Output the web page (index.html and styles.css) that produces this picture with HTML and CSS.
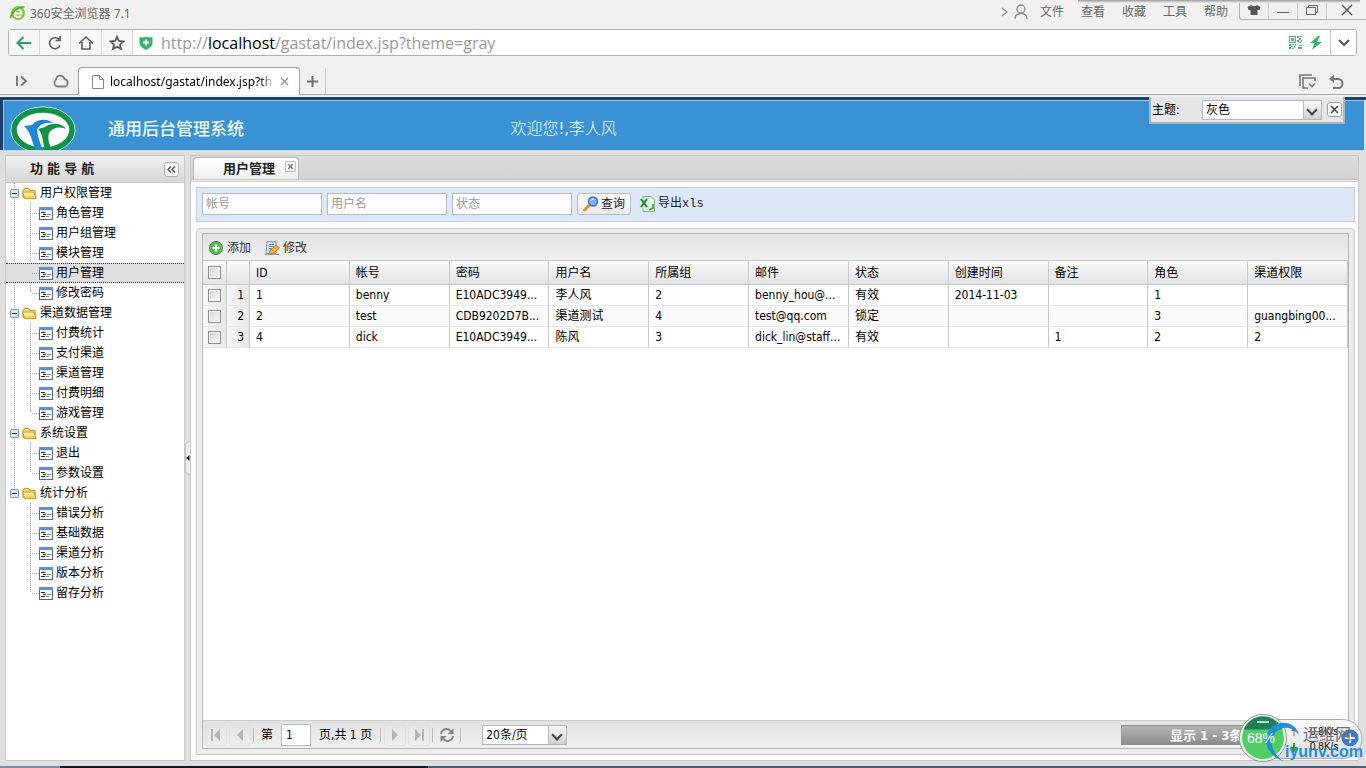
FILE: index.html
```html
<!DOCTYPE html>
<html lang="zh-CN">
<head>
	<meta charset="utf-8">
	<title>通用后台管理系统</title>
	<link rel="stylesheet" href="styles.css">
</head>
<body>
	<svg class="sprite">
		<linearGradient id="fold" x1="0" y1="0" x2="0" y2="1"><stop offset="0" stop-color="#fff8c0"/><stop offset="1" stop-color="#f0c838"/></linearGradient>
		<symbol id="i-folder" viewBox="0 0 16 16">
			<path d="M1 12V4L2.500 2.500H7L8.500 4.500H14V12.500Z" fill="#f6dc70" stroke="#b58a1c"/>
			<path d="M2.500 13.500L.8 6.500H12.500L15.200 13.500Z" fill="url(#fold)" stroke="#c09a30"/>
		</symbol>
		<symbol id="i-leaf" viewBox="0 0 14 13">
			<rect x=".5" y=".5" width="13" height="12" fill="#fff" stroke="#4a6894"/>
			<rect x="0" y="0" width="14" height="3" fill="#5f8ede"/>
			<path d="M2 5.500H6M4 7.500H7M2 9.500H6" stroke="#222"/>
			<path d="M8 7.500H12M7 9.500H10" stroke="#7c8894"/>
		</symbol>
		<symbol id="i-minus" viewBox="0 0 9 9">
			<rect x=".5" y=".5" width="8" height="8" rx="1" fill="#dbe7f6" stroke="#7590b4"/>
			<path d="M2 4.500H7" stroke="#1c3050"/>
		</symbol>
	</svg>

	<div class="titlebar">
		<svg width="16" height="16" viewBox="0 0 16 16"><circle cx="8" cy="8" r="7" fill="#7cc93a"/><path d="M4.500 8.500H11.500C11.500 3.500 4.500 3.500 4.500 8.500C4.500 12.500 9.500 13 11.300 10.500" fill="none" stroke="#fff" stroke-width="2"/><path d="M1 13C0 9 8 1 14.500 2" fill="none" stroke="#4ba51c" stroke-width="1.500"/></svg>
		<span class="app-name">360安全浏览器 7.1</span>
		<svg class="user" width="28" height="16" viewBox="0 0 28 16" fill="none" stroke="#8a8a8a" stroke-width="1.300"><path d="M1 4L6 8L1 12"/><circle cx="20" cy="5" r="4"/><path d="M14 15C14 11 17 9.500 20 9.500S26 11 26 15"/></svg>
		<a href="#">文件</a>
		<a href="#">查看</a>
		<a href="#">收藏</a>
		<a href="#">工具</a>
		<a href="#">帮助</a>
		<div class="winbtns">
			<button aria-label="皮肤"><svg width="14" height="12" viewBox="0 0 14 12"><path d="M4 1Q7 3.500 10 1L13.500 3L12.500 6H10.500V11H3.500V6H1.500L.5 3Z" fill="#555"/></svg></button>
			<button aria-label="最小化"><svg width="12" height="12" viewBox="0 0 12 12"><path d="M0 8.500H12" stroke="#666"/></svg></button>
			<button aria-label="还原"><svg width="12" height="12" viewBox="0 0 12 12" fill="none" stroke="#666"><path d="M2.500 3V1.500H11.500V8.500H10"/><path d="M.5 3.500H9.500V10.500H.5Z"/></svg></button>
			<button aria-label="关闭"><svg width="12" height="12" viewBox="0 0 12 12"><path d="M1 1L11 11M11 1L1 11" stroke="#555" stroke-width="1.400"/></svg></button>
		</div>
		<div class="shade"></div>
	</div>

	<div class="addressbar">
		<button aria-label="后退"><svg width="18" height="16" viewBox="0 0 18 16" fill="none" stroke="#27a35f" stroke-width="2"><path d="M8.500 2L2.500 8L8.500 14M2.500 8H16"/></svg></button>
		<button aria-label="刷新"><svg width="16" height="16" viewBox="0 0 16 16" fill="none" stroke="#5a5a5a" stroke-width="1.600"><path d="M12.500 5A5.500 5.500 0 1 0 13 10.500"/><path d="M13 1V5.500H8.500"/></svg></button>
		<button aria-label="主页"><svg width="16" height="16" viewBox="0 0 16 16" fill="none" stroke="#5a5a5a" stroke-width="1.600"><path d="M1 8.500L8 2L15 8.500M4 7V14H12V7"/></svg></button>
		<button aria-label="收藏"><svg width="16" height="16" viewBox="0 0 16 16" fill="none" stroke="#5a5a5a" stroke-width="1.800"><path d="M8 1.800L9.900 6L14.400 6.500L11 9.600L12 14L8 11.700L4 14L5 9.600L1.600 6.500L6.100 6Z"/></svg></button>
		<div class="url">
			<svg width="14" height="14" viewBox="0 0 14 14"><path d="M.5 1Q4 2 7 .5Q10 2 13.500 1V8Q13 11 7 14Q1 11 .5 8Z" fill="#35b56c"/><path d="M7 3.500V9.500M4 6.500H10" stroke="#fff" stroke-width="2"/></svg>
			<span class="addr">http://<b>localhost</b>/gastat/index.jsp?theme=gray</span>
			<svg width="13" height="13" viewBox="0 0 13 13" fill="#45b878"><path d="M0 0H7V7H0ZM1 1V6H6V1Z" fill-rule="evenodd"/><path d="M2 2H5V5H2ZM8 0H10V2H8ZM11 0H13V1H11ZM10 2H12V4H10ZM8 4H10V6H8ZM12 4H13V6H12ZM10 6H12V7H10ZM0 8H2V10H0ZM3 8H5V9H3ZM6 8H7V10H6ZM2 10H4V11H2ZM5 10H6V12H5ZM0 11H2V13H0ZM3 12H5V13H3ZM10 9H13V10H10ZM9 11H13V13H9Z"/></svg>
			<svg class="bolt" width="12" height="14" viewBox="0 0 12 14"><path d="M8 0L0 7H4.500L2 14L12 6H7L10 0Z" fill="#35b56c"/></svg>
		</div>
		<button class="drop" aria-label="历史"><svg width="14" height="12" viewBox="0 0 14 12"><path d="M2 3L7 8L12 3" fill="none" stroke="#555" stroke-width="2"/></svg></button>
	</div>

	<div class="tabstrip">
		<svg class="side" width="12" height="12" viewBox="0 0 12 12" fill="none" stroke="#707070" stroke-width="1.800"><path d="M1 1V11M5 1.500L10 6L5 10.500"/></svg>
		<svg class="cloud" width="18" height="14" viewBox="0 0 18 14"><path d="M5 12.500A4 4 0 0 1 4 5.500C5 .5 11 .5 12.500 5A4 4 0 0 1 13.500 12.500Z" fill="none" stroke="#808080" stroke-width="1.800"/></svg>
		<div class="browser-tab">
			<svg width="12" height="14" viewBox="0 0 12 14" fill="none" stroke="#888"><path d="M.5 .5H7.500L11.500 4.500V13.500H.5ZM7.500 .5V4.500H11.500"/></svg>
			<span>localhost/gastat/index.jsp?th</span>
			<svg width="9" height="9" viewBox="0 0 9 9"><path d="M1 1L8 8M8 1L1 8" stroke="#909090" stroke-width="1.300"/></svg>
		</div>
		<button class="newtab" aria-label="新标签"><svg width="11" height="11" viewBox="0 0 11 11"><path d="M5.500 0V11M0 5.500H11" stroke="#707070" stroke-width="2"/></svg></button>
		<svg class="restore" width="48" height="18" viewBox="0 0 48 18" fill="none" stroke="#777" stroke-width="1.600"><path d="M2 13V2H14"/><path d="M10 15H5V5H17V8"/><path d="M11 10.500L14 13.500L17 10.500"/><path d="M34 6H40A4.500 4.500 0 0 1 40 15H35" stroke-width="2"/><path d="M36 1.500L31 6L36 10Z" fill="#777" stroke="none"/></svg>
	</div>

	<div class="banner">
		<div class="brand">
			<svg class="logo" width="66" height="44" viewBox="0 0 66 44">
				<ellipse cx="33" cy="24" rx="32.500" ry="23.500" fill="#fff"/>
				<ellipse cx="33" cy="24" rx="29" ry="20" fill="#fff" stroke="#0f9244" stroke-width="5.500"/>
				<path d="M14 20L22 19C28 12 38 13 43 17C34 16 29 19 27 24C28 32 31 39 33 45H27C21 38 23 28 14 20Z" fill="#1d87d8"/>
				<path d="M28 23L35 21C42 16 52 17 56 23C49 20 42 22 39 27C37 34 40 41 43 45H36C32 38 34 29 28 23Z" fill="#0f9244"/>
			</svg>
			<h1>通用后台管理系统</h1>
		</div>
		<div class="welcome">欢迎您<b>!,</b>李人风</div>
		<div class="theme">
			<label for="theme">主题:</label>
			<span class="combo"><select id="theme"><option>灰色</option></select></span>
			<button aria-label="关闭"><svg width="9" height="9" viewBox="0 0 9 9"><path d="M1 1L8 8M8 1L1 8" stroke="#444" stroke-width="1.500"/></svg></button>
		</div>
	</div>

	<div class="workspace">
		<div class="sidebar">
			<div class="panel-head">
				<h2>功 能 导 航</h2>
				<button aria-label="收起"><svg width="9" height="7" viewBox="0 0 9 7" fill="none" stroke="#444" stroke-width="1.300"><path d="M4 .5L1 3.500L4 6.500M8 .5L5 3.500L8 6.500"/></svg></button>
			</div>
			<ul class="tree">
				<li><a class="node" href="#"><svg class="exp"><use href="#i-minus"/></svg><svg class="fold"><use href="#i-folder"/></svg>用户权限管理</a>
					<ul>
						<li><a href="#"><svg><use href="#i-leaf"/></svg>角色管理</a></li>
						<li><a href="#"><svg><use href="#i-leaf"/></svg>用户组管理</a></li>
						<li><a href="#"><svg><use href="#i-leaf"/></svg>模块管理</a></li>
						<li><a href="#" class="selected"><svg><use href="#i-leaf"/></svg>用户管理</a></li>
						<li><a href="#"><svg><use href="#i-leaf"/></svg>修改密码</a></li>
					</ul>
				</li>
				<li><a class="node" href="#"><svg class="exp"><use href="#i-minus"/></svg><svg class="fold"><use href="#i-folder"/></svg>渠道数据管理</a>
					<ul>
						<li><a href="#"><svg><use href="#i-leaf"/></svg>付费统计</a></li>
						<li><a href="#"><svg><use href="#i-leaf"/></svg>支付渠道</a></li>
						<li><a href="#"><svg><use href="#i-leaf"/></svg>渠道管理</a></li>
						<li><a href="#"><svg><use href="#i-leaf"/></svg>付费明细</a></li>
						<li><a href="#"><svg><use href="#i-leaf"/></svg>游戏管理</a></li>
					</ul>
				</li>
				<li><a class="node" href="#"><svg class="exp"><use href="#i-minus"/></svg><svg class="fold"><use href="#i-folder"/></svg>系统设置</a>
					<ul>
						<li><a href="#"><svg><use href="#i-leaf"/></svg>退出</a></li>
						<li><a href="#"><svg><use href="#i-leaf"/></svg>参数设置</a></li>
					</ul>
				</li>
				<li><a class="node" href="#"><svg class="exp"><use href="#i-minus"/></svg><svg class="fold"><use href="#i-folder"/></svg>统计分析</a>
					<ul>
						<li><a href="#"><svg><use href="#i-leaf"/></svg>错误分析</a></li>
						<li><a href="#"><svg><use href="#i-leaf"/></svg>基础数据</a></li>
						<li><a href="#"><svg><use href="#i-leaf"/></svg>渠道分析</a></li>
						<li><a href="#"><svg><use href="#i-leaf"/></svg>版本分析</a></li>
						<li><a href="#"><svg><use href="#i-leaf"/></svg>留存分析</a></li>
					</ul>
				</li>
			</ul>
		</div>
		<div class="splitter"><svg width="5" height="34" viewBox="0 0 5 34"><path d="M5 0L.5 3V31L5 34" fill="#eee" stroke="#c4c4c4"/><path d="M4.500 14V20L1 17Z" fill="#222"/></svg></div>
		<div class="main">
			<div class="tabs">
				<div class="tab">用户管理<button aria-label="关闭标签"><svg width="5" height="5" viewBox="0 0 5 5"><path d="M0 0L5 5M5 0L0 5" stroke="#777" stroke-width="1.500"/></svg></button></div>
			</div>
			<div class="content">
				<form class="search">
					<input type="text" placeholder="帐号" aria-label="帐号">
					<input type="text" placeholder="用户名" aria-label="用户名">
					<input type="text" placeholder="状态" aria-label="状态">
					<button type="button" class="query"><svg width="16" height="16" viewBox="0 0 16 16"><path d="M1.500 14L6 9.500" stroke="#d8912a" stroke-width="3" stroke-linecap="round"/><circle cx="10" cy="5.500" r="4.500" fill="#7fb0ee" stroke="#3c6cb8" stroke-width="1.400"/><path d="M7.500 5Q8.500 2.800 11 3" fill="none" stroke="#fff"/></svg>查询</button>
					<button type="button" class="export"><svg width="16" height="16" viewBox="0 0 16 16"><path d="M4 .5H12L15.500 4V15.500H4Z" fill="#e6f4e4" stroke="#7eb37e"/><rect x="0" y="2" width="10" height="10" fill="#d6ebd4"/><path d="M2 3L8 11M8 3L2 11" stroke="#237a34" stroke-width="2"/><path d="M10 14L14 12V8" fill="none" stroke="#3a9a4a" stroke-width="1.500"/></svg>导出xls</button>
				</form>
				<div class="gridframe">
					<div class="grid">
						<div class="toolbar">
							<button><svg width="16" height="16" viewBox="0 0 16 16"><circle cx="8" cy="8" r="6.500" fill="#5fb85a" stroke="#3a8f3c"/><path d="M8 4.500V11.500M4.500 8H11.500" stroke="#fff" stroke-width="2"/></svg>添加</button>
							<button><svg width="16" height="16" viewBox="0 0 16 16"><path d="M3 1.500H12V13.500H2Z" fill="#cfe2f6" stroke="#7a9cc4"/><path d="M5 4.500H10M5 6.500H10M5 8.500H8" stroke="#6a8cb8"/><path d="M.5 14.500H15" stroke="#a99"/><path d="M5 14L6 10.500L12.500 5L15.500 8L9 13.500Z" fill="#f6b33c" stroke="#c47a1a"/></svg>修改</button>
						</div>
						<div class="gridbody">
							<table>
								<colgroup><col class="c-check"><col class="c-num"><col span="11"></colgroup>
								<thead>
									<tr><th><input type="checkbox" aria-label="全选"></th><th></th><th>ID</th><th>帐号</th><th>密码</th><th>用户名</th><th>所属组</th><th>邮件</th><th>状态</th><th>创建时间</th><th>备注</th><th>角色</th><th>渠道权限</th></tr>
								</thead>
								<tbody>
									<tr><td class="gut"><input type="checkbox" aria-label="选择 1"></td><td class="gut num">1</td><td>1</td><td>benny</td><td>E10ADC3949...</td><td>李人风</td><td>2</td><td>benny_hou@...</td><td>有效</td><td>2014-11-03</td><td></td><td>1</td><td></td></tr>
									<tr><td class="gut"><input type="checkbox" aria-label="选择 2"></td><td class="gut num">2</td><td>2</td><td>test</td><td>CDB9202D7B...</td><td>渠道测试</td><td>4</td><td>test@qq.com</td><td>锁定</td><td></td><td></td><td>3</td><td>guangbing00...</td></tr>
									<tr><td class="gut"><input type="checkbox" aria-label="选择 3"></td><td class="gut num">3</td><td>4</td><td>dick</td><td>E10ADC3949...</td><td>陈风</td><td>3</td><td>dick_lin@staff...</td><td>有效</td><td></td><td>1</td><td>2</td><td>2</td></tr>
								</tbody>
							</table>
						</div>
						<div class="pager">
							<button aria-label="首页"><svg width="12" height="12" viewBox="0 0 12 12" fill="#b4b4b4"><path d="M1 0H3V12H1ZM10 0V12L4 6Z"/></svg></button>
							<button aria-label="上一页"><svg width="12" height="12" viewBox="0 0 12 12" fill="#b4b4b4"><path d="M9 0V12L3 6Z"/></svg></button>
							<i></i>
							<label for="page">第</label>
							<input id="page" type="text" value="1">
							<span class="total">页,共 1 页</span>
							<i></i>
							<button aria-label="下一页"><svg width="12" height="12" viewBox="0 0 12 12" fill="#b4b4b4"><path d="M3 0V12L9 6Z"/></svg></button>
							<button aria-label="末页"><svg width="12" height="12" viewBox="0 0 12 12" fill="#b4b4b4"><path d="M2 0V12L8 6ZM9 0H11V12H9Z"/></svg></button>
							<i></i>
							<button class="live" aria-label="刷新"><svg width="16" height="16" viewBox="0 0 16 16" fill="none" stroke="#858585" stroke-width="2"><path d="M2 7A5.500 5.500 0 0 1 12 4.500"/><path d="M14 9A5.500 5.500 0 0 1 4 11.500"/><path d="M14.500 1V7H8.500ZM1.500 15V9H7.500Z" fill="#858585" stroke="none"/></svg></button>
							<i></i>
							<span class="combo size"><select aria-label="每页条数"><option>20条/页</option></select></span>
							<div class="progress">显示 1 - 3条</div>
						</div>
					</div>
				</div>
			</div>
		</div>
	</div>
	<div class="taskbar"></div>

	<div class="meter">
		<svg width="128" height="56" viewBox="0 0 128 56">
			<defs><linearGradient id="pill" x1="0" y1="0" x2="0" y2="1"><stop offset="0" stop-color="#fbfbfb"/><stop offset="1" stop-color="#dcdcdc"/></linearGradient></defs>
			<rect x="20" y="9.500" width="104" height="39" rx="19.500" fill="url(#pill)" stroke="#aaa"/>
			<circle cx="25" cy="28" r="23.500" fill="#f2f8f2" stroke="#8a9a8a"/>
			<circle cx="25" cy="28" r="21" fill="#4fce66"/>
			<path d="M5.500 19.500A21 21 0 0 1 44.500 19.500Z" fill="#1f8058"/>
			<path d="M19 12H31" stroke="#b8e8c8" stroke-width="2"/>
			<path d="M56 26V20M53.500 21L56 17L58.500 21" stroke="#d24a4a" fill="#d24a4a"/>
			<path d="M56 33V38M53 37L56 41L59 37" stroke="#2f9a3f" stroke-width="2" fill="#2f9a3f"/>
			<circle cx="112" cy="28" r="8.500" fill="#3478d8"/>
			<path d="M112 23V33M107 28H117" stroke="#fff" stroke-width="2"/>
			<path d="M61 25C58 13 44 9 34 17C23 27 27 44 45 51C33 42 30 30 38 22C45 15 55 17 61 25Z" fill="#1b8fdc"/>
		</svg>
		<span class="pct">68%</span>
		<span class="up">0.8K/s</span>
		<span class="down">0.8K/s</span>
		<span class="mark-cn">运维网</span>
		<span class="mark-en">iyunv.com</span>
	</div>
</body>
</html>
```
FILE: styles.css
```css
* {
	box-sizing: border-box;
}
html, body {
	height: 100%;
}
body {
	margin: 0;
	display: flex;
	flex-direction: column;
	overflow: hidden;
	position: relative;
	background: #f0f0f0;
	color: #000;
	font: 12px/20px "DejaVu Sans Condensed", "Noto Sans", "Noto Sans CJK SC", sans-serif;
}
a {
	color: inherit;
	text-decoration: none;
}
button, input, select {
	font: inherit;
	color: inherit;
	margin: 0;
	padding: 0;
	border: 0;
	background: none;
}
button {
	display: flex;
	align-items: center;
	justify-content: center;
}
svg {
	flex: none;
}
.sprite {
	position: absolute;
	width: 0;
	height: 0;
}

/* browser window */
.titlebar {
	flex: none;
	height: 29px;
	display: flex;
	align-items: flex-start;
	padding-left: 10px;
	color: #666;
	font-family: "Noto Sans", "Noto Sans CJK SC", sans-serif;
	position: relative;
}
.titlebar > svg {
	margin-top: 5px;
}
.titlebar .user {
	margin-top: 4px;
}
.titlebar a {
	margin: 2px 0 0 17px;
}
.titlebar svg + a {
	margin-left: 11px;
}
.app-name {
	margin: 4px auto 0 4px;
}
.winbtns {
	display: flex;
	margin-left: 11px;
	border: solid #b5b5b5;
	border-width: 0 0 1px 1px;
	border-radius: 0 0 0 3px;
}
.winbtns button {
	width: 29px;
	height: 19px;
	border-right: 1px solid #d0d0d0;
}
.winbtns button:last-child {
	width: 39px;
	border: 0;
}
.shade {
	position: absolute;
	top: 0;
	right: 6px;
	width: 282px;
	height: 3px;
	background: linear-gradient(#999, #f0f0f0);
}
.addressbar {
	flex: none;
	height: 27px;
	margin: 0 9px 0 8px;
	display: flex;
	border: 1px solid #b0b0b0;
	border-radius: 3px;
	background: #fff;
}
.addressbar button {
	width: 31px;
	background: #f7f7f7;
	border-right: 1px solid #d8d8d8;
}
.addressbar .drop {
	width: 26px;
	background: #fff;
	border: 0;
	border-left: 1px solid #c0c0c0;
}
.url {
	flex: 1;
	display: flex;
	align-items: center;
	padding: 0 8px 0 6px;
	font: 16px/24px "Open Sans", sans-serif;
	color: #999;
}
.url b {
	font-weight: normal;
	color: #000;
}
.addr {
	flex: 1;
	margin-left: 8px;
}
.bolt {
	margin-left: 8px;
}
.tabstrip {
	flex: none;
	height: 39px;
	display: flex;
	align-items: flex-end;
	border-bottom: 1px solid #a8a8a8;
	font-family: "Noto Sans", sans-serif;
}
.side {
	margin: 0 0 7px 16px;
}
.cloud {
	margin: 0 8px 6px 24px;
}
.browser-tab {
	width: 222px;
	height: 28px;
	margin-bottom: -1px;
	display: flex;
	align-items: center;
	padding: 0 10px 0 13px;
	background: #fff;
	border: 1px solid #a0a0a0;
	border-bottom: 0;
	border-radius: 4px 4px 0 0;
}
.browser-tab span {
	flex: 1;
	margin: 0 4px 0 6px;
	white-space: nowrap;
	font-size: 12px;
	-webkit-mask-image: linear-gradient(to right, #000 90%, transparent);
}
.newtab {
	width: 26px;
	height: 26px;
	border-right: 1px solid #c8c8c8;
}
.restore {
	margin: 0 20px 3px auto;
}

/* page banner */
.banner {
	flex: none;
	height: 53px;
	display: flex;
	align-items: flex-start;
	padding: 3px 0 0;
	border: solid #1f3f6e;
	border-width: 2px 0 0;
	box-shadow: inset 0 1px #1f3f6e, inset 3px 0 #1f3f6e, inset -2px 0 #cfe4f6, inset 4px 2px #9fc8ea;
	background: #3a91d4;
	color: #ecffff;
	margin-top: 2px;
	position: relative;
}
.brand {
	flex: 0 0 37%;
	display: flex;
	padding-left: 10px;
}
.logo {
	margin-top: 4px;
}
h1 {
	margin: 17px 0 0 32px;
	font-size: 17px;
	line-height: 20px;
	font-weight: 500;
}
.welcome {
	margin: 17px 0 0 5px;
	font-size: 16px;
	font-weight: 300;
}
.theme {
	position: absolute;
	top: -2px;
	right: 21px;
	width: 196px;
	height: 27px;
	display: flex;
	align-items: center;
	padding: 0 1px;
	background: #e6e6e8;
	border: solid #a8b4c0;
	border-width: 0 2px 2px;
	color: #000;
}
.theme .combo {
	width: 120px;
	margin: 0 5px 0 auto;
}
.theme button {
	width: 15px;
	height: 15px;
	background: #fafafa;
	border: 1px solid #a0a0a0;
	border-radius: 3px;
}
.combo {
	display: inline-flex;
	position: relative;
	height: 20px;
	background: #fff;
	border: 1px solid #b0b8c4;
}
.combo select {
	appearance: none;
	width: 100%;
	padding-left: 3px;
	line-height: 18px;
}
.combo::before {
	content: "";
	position: absolute;
	top: 0;
	right: 0;
	bottom: 0;
	width: 17px;
	background: linear-gradient(#f8f8f8, #cfcfcf);
	border-left: 1px solid #b0b8c4;
	pointer-events: none;
}
.combo::after {
	content: "";
	position: absolute;
	top: 5px;
	right: 5px;
	width: 6px;
	height: 6px;
	border: solid #444;
	border-width: 0 2px 2px 0;
	transform: rotate(45deg);
	pointer-events: none;
}

/* workspace */
.workspace {
	flex: 1;
	min-height: 0;
	display: flex;
	padding: 4px 7px 5px 5px;
	background: #dfdfdf;
	border-top: 1px solid #c8dcf0;
}
.sidebar {
	flex: none;
	width: 180px;
	background: #fff;
	border: 1px solid #c8c8c8;
}
.panel-head {
	height: 27px;
	display: flex;
	align-items: center;
	padding: 0 5px 0 24px;
	background: linear-gradient(#f2f2f2, #d6d6d6);
	border-bottom: 1px solid #c8c8c8;
}
.panel-head h2 {
	flex: 1;
	margin: 0;
	font-size: 13px;
	line-height: 20px;
	color: #222;
}
.panel-head button {
	width: 15px;
	height: 15px;
	background: #fafafa;
	border: 1px solid #b0b0b0;
	border-radius: 3px;
}
.tree, .tree ul {
	margin: 0;
	padding: 0;
	list-style: none;
}
.tree > li {
	background: repeating-linear-gradient(#aaa 0 1px, transparent 1px 2px) 8px 0 / 1px 100% no-repeat;
}
.tree > li:last-child {
	background-size: 1px 10px;
}
.tree ul {
	background: repeating-linear-gradient(#aaa 0 1px, transparent 1px 2px) 24px 0 / 1px calc(100% - 10px) no-repeat;
}
.tree a {
	height: 20px;
	display: flex;
	align-items: center;
	gap: 4px;
}
.tree ul a {
	padding-left: 33px;
	gap: 3px;
	background: repeating-linear-gradient(to right, #aaa 0 1px, transparent 1px 2px) 26px 10px / 7px 1px no-repeat;
}
.tree ul a svg {
	width: 14px;
	height: 13px;
}
.tree .node {
	padding-left: 4px;
	gap: 3px;
}
.tree .exp {
	width: 9px;
	height: 9px;
}
.tree .fold {
	width: 15px;
	height: 15px;
}
.tree ul .selected {
	background-color: #dfdfdf;
	border: dotted #333;
	border-width: 1px 0;
	background-position: 26px 9px;
}
.splitter {
	flex: none;
	width: 5px;
	display: flex;
	align-items: center;
}
.main {
	flex: 1;
	min-width: 0;
	display: flex;
	flex-direction: column;
	background: #fff;
	border: 1px solid #c8c8c8;
}
.tabs {
	flex: none;
	height: 26px;
	display: flex;
	align-items: flex-end;
	padding: 0 2px 2px;
	background: linear-gradient(#dcdcdc, #d2d2d2 23px, #c4c4c4 23px, #c4c4c4 24px, #efefef 24px);
	border-bottom: 1px solid #d0d0d0;
}
.tab {
	width: 106px;
	height: 22px;
	display: flex;
	align-items: center;
	padding: 0 2px 0 29px;
	background: linear-gradient(#fff, #eee);
	border: 1px solid #b8b8b8;
	border-bottom: 0;
	border-radius: 4px 4px 0 0;
	font-size: 13px;
	font-weight: bold;
	color: #222;
}
.tab button {
	width: 11px;
	height: 11px;
	margin: 0 0 4px auto;
	border: 1px solid #bbb;
	border-radius: 2px;
}
.content {
	flex: 1;
	min-height: 0;
	display: flex;
	flex-direction: column;
	gap: 6px;
	padding: 5px 3px 5px 5px;
}
.search {
	flex: none;
	height: 35px;
	display: flex;
	align-items: center;
	gap: 5px;
	padding: 0 5px 1px;
	background: #dde7f5;
	border: 1px solid #c8ced8;
}
.search input {
	width: 120px;
	height: 22px;
	padding: 0 3px;
	background: #fff;
	border: 1px solid #b5b8c8;
}
.search input::placeholder {
	color: #999;
}
.query {
	width: 54px;
	height: 22px;
	gap: 2px;
	background: linear-gradient(#fff, #e8e8e8);
	border: 1px solid #b8bcc4;
	border-radius: 3px;
	color: #222;
}
.export {
	margin-left: 3px;
	gap: 3px;
	font-size: 12px;
	font-family: "Liberation Mono", "Noto Sans CJK SC", monospace;
	color: #222;
}
.gridframe {
	flex: 1;
	min-height: 0;
	display: flex;
	padding: 4px 5px 5px;
	background: #ececec;
	border: 1px solid #ccc;
	border-radius: 4px 4px 0 0;
}
.grid {
	flex: 1;
	min-width: 0;
	display: flex;
	flex-direction: column;
	background: #fff;
	border: 1px solid #b5b5b5;
}
.toolbar {
	flex: none;
	height: 26px;
	display: flex;
	align-items: center;
	gap: 13px;
	padding: 2px 5px 0;
	background: linear-gradient(#e2e2e2, #efefef);
}
.toolbar button {
	gap: 3px;
	color: #333;
}
.gridbody {
	flex: 1;
	min-height: 0;
}
table {
	width: 100%;
	table-layout: fixed;
	border-collapse: separate;
	border-spacing: 0;
}
.c-check {
	width: 24px;
}
.c-num {
	width: 23px;
}
th {
	height: 25px;
	padding: 0 6px;
	text-align: left;
	font-weight: normal;
	background: linear-gradient(#fafafa, #e2e3e6);
	border: solid #c8c8c8;
	border-width: 1px 1px 1px 0;
}
td {
	height: 21px;
	padding: 0 6px;
	line-height: 20px;
	white-space: nowrap;
	overflow: hidden;
	border-right: 1px solid #c8c8c8;
	border-bottom: 1px solid #e8e8e8;
}
tbody tr:nth-child(even) {
	background: #fafafa;
}
.gut {
	padding: 0 5px;
	background: linear-gradient(to right, #f6f6f6, #e8e8e8);
}
.num {
	text-align: right;
}
th:first-child {
	padding: 0 5px;
}
td input, th input {
	display: block;
	appearance: none;
	width: 13px;
	height: 13px;
	background: linear-gradient(135deg, #ccd0d4, #fff);
	border: 1px solid #8e8f8f;
	box-shadow: inset 0 0 0 1px #f4f4f4;
}
.pager {
	flex: none;
	height: 28px;
	display: flex;
	align-items: center;
	padding: 0 2px;
	background: linear-gradient(#e2e2e2, #efefef);
	border-top: 1px solid #ccc;
}
.pager button {
	width: 22px;
	height: 22px;
	margin-right: 2px;
	border: 1px solid #e0e0e0;
	border-radius: 3px;
}
.pager i {
	width: 1px;
	height: 14px;
	margin-right: 3px;
	background: #b8b8b8;
}
.pager label {
	margin: 0 8px 0 4px;
}
.pager input {
	width: 30px;
	height: 22px;
	padding: 0 4px;
	background: #fff;
	border: 1px solid #b5b8c8;
}
.total {
	margin: 0 8px;
}
.pager .live {
	border: 0;
}
.pager .size {
	width: 85px;
	margin-left: 18px;
}
.progress {
	width: 225px;
	height: 20px;
	margin-left: auto;
	padding-left: 48px;
	line-height: 20px;
	background: linear-gradient(#b4b4b4, #8c8c8c);
	border: 1px solid #909090;
	color: #fff;
	font-size: 13px;
	font-weight: bold;
}
.taskbar {
	flex: none;
	height: 2px;
	background: linear-gradient(to right, #7a8ba8 60px, #10182a 60px, #10182a 428px, #4a5f80 428px);
}

/* network meter floating over the pager */
.meter {
	position: absolute;
	right: 0;
	bottom: 2px;
	width: 128px;
	height: 56px;
	line-height: 14px;
}
.meter span {
	position: absolute;
}
.meter .pct {
	left: 9px;
	top: 20px;
	color: #fff;
	font: 14px/16px "Liberation Sans", sans-serif;
}
.meter .up, .meter .down {
	left: 72px;
	font: 10px/14px "Liberation Sans", sans-serif;
}
.meter .up {
	top: 15px;
}
.meter .down {
	top: 30px;
}
.meter .mark-cn {
	left: 65px;
	top: 18px;
	font-size: 16px;
	color: #6a7280;
}
.meter .mark-en {
	left: 47px;
	top: 33px;
	font: bold 16px/18px "Liberation Sans", sans-serif;
	color: #1b8fdc;
}
```
